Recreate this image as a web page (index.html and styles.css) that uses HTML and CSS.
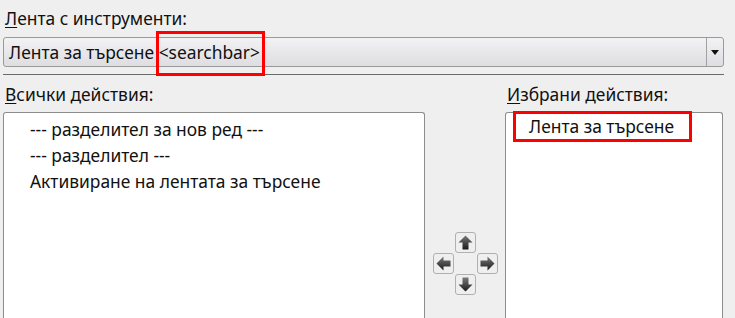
FILE: index.html
```html
<!DOCTYPE html>
<html>
<head>
<meta charset="utf-8">
<link rel="stylesheet" href="styles.css">
</head>
<body>
<div class="page">
  <div class="label top-label"><u>Л</u>ента с инструменти:</div>
  <div class="combo">
    <div class="combo-text">Лента за търсене <span class="hl-inline">&lt;searchbar&gt;</span></div>
    <div class="combo-btn"><svg width="8" height="5" viewBox="0 0 8 5"><path d="M0 0H8L4 5Z" fill="#111"/></svg></div>
  </div>
  <div class="rule"></div>
  <div class="columns">
    <div class="col left-col">
      <div class="label"><u>В</u>сички действия:</div>
      <div class="list">
        <div class="item">--- разделител за нов ред ---</div>
        <div class="item">--- разделител ---</div>
        <div class="item">Активиране на лентата за търсене</div>
      </div>
    </div>
    <div class="mid">
      <div class="pad">
        <div class="abtn up"><svg class="ico" width="15" height="15" viewBox="0 0 15 15"><defs><linearGradient id="g1" x1="0" y1="0" x2="0" y2="1"><stop offset="0" stop-color="#7a7a7a"/><stop offset="1" stop-color="#1a1a1a"/></linearGradient></defs><path d="M7.5 0.5L14.5 7.5H10.5V14.5H4.5V7.5H0.5Z" fill="url(#g1)"/></svg></div>
        <div class="row">
          <div class="abtn"><svg class="ico" width="15" height="15" viewBox="0 0 15 15"><defs><linearGradient id="g2" x1="0" y1="0" x2="0" y2="1"><stop offset="0" stop-color="#7a7a7a"/><stop offset="1" stop-color="#1a1a1a"/></linearGradient></defs><path d="M0.5 7.5L7.5 0.5V4.5H14.5V10.5H7.5V14.5Z" fill="url(#g2)"/></svg></div>
          <div class="abtn"><svg class="ico" width="15" height="15" viewBox="0 0 15 15"><defs><linearGradient id="g3" x1="0" y1="0" x2="0" y2="1"><stop offset="0" stop-color="#7a7a7a"/><stop offset="1" stop-color="#1a1a1a"/></linearGradient></defs><path d="M14.5 7.5L7.5 0.5V4.5H0.5V10.5H7.5V14.5Z" fill="url(#g3)"/></svg></div>
        </div>
        <div class="abtn down"><svg class="ico" width="15" height="15" viewBox="0 0 15 15"><defs><linearGradient id="g4" x1="0" y1="0" x2="0" y2="1"><stop offset="0" stop-color="#7a7a7a"/><stop offset="1" stop-color="#1a1a1a"/></linearGradient></defs><path d="M7.5 14.5L14.5 7.5H10.5V0.5H4.5V7.5H0.5Z" fill="url(#g4)"/></svg></div>
      </div>
    </div>
    <div class="col right-col">
      <div class="label"><u>И</u>збрани действия:</div>
      <div class="list">
        <div class="item sel"><span class="hl-box">Лента за търсене</span></div>
      </div>
    </div>
  </div>
</div>
</body>
</html>
```
FILE: styles.css
```css
html, body {
  margin: 0;
  padding: 0;
  background: #efefef;
  overflow: hidden;
  height: 318px;
}
body {
  font-family: "Noto Sans", "DejaVu Sans", sans-serif;
  font-size: 17.4px;
  color: #111;
}
.page {
  padding: 0 11px 0 3px;
  display: flex;
  flex-direction: column;
}
.label {
  line-height: 20px;
  padding-left: 2px;
}
.label u {
  text-decoration-thickness: 1px;
  text-underline-offset: 2px;
}
.top-label {
  margin-top: 8px;
}
.combo {
  margin-top: 9px;
  height: 30px;
  box-sizing: border-box;
  border: 1px solid #9a9a9a;
  border-radius: 3px;
  background: linear-gradient(#f2f2f4, #dedee2);
  display: flex;
  align-items: center;
}
.combo-text {
  flex: 1;
  padding-left: 5px;
  white-space: nowrap;
}
.hl-inline {
  position: relative;
}
.hl-inline::after {
  content: "";
  position: absolute;
  left: -3px;
  right: -5px;
  top: calc(50% - 21px);
  height: 45px;
  box-sizing: border-box;
  border: 3px solid #f00;
}
.combo-btn {
  width: 16px;
  height: 100%;
  border-left: 1px solid #a0a0a0;
  display: flex;
  align-items: center;
  justify-content: center;
}
.rule {
  margin-top: 7px;
  height: 1px;
  background: #6a6a6a;
}
.columns {
  margin-top: 9px;
  display: flex;
}
.col {
  display: flex;
  flex-direction: column;
}
.left-col {
  width: 422px;
}
.right-col {
  width: 218px;
}
.list {
  margin-top: 8px;
  height: 303px;
  box-sizing: border-box;
  background: #fff;
  border: 1px solid #8c8c8c;
  border-bottom: none;
  border-radius: 3px 3px 0 0;
  padding-top: 3px;
}
.item {
  line-height: 26px;
  padding-left: 26px;
  white-space: nowrap;
}
.item.sel {
  padding-left: 7px;
  display: flex;
}
.hl-box {
  display: block;
  border: 3px solid #f00;
  line-height: 25px;
  padding: 0 15px 0 13px;
  margin-top: -5px;
}
.mid {
  width: 80px;
  display: flex;
  align-items: center;
  justify-content: center;
  padding-top: 28px;
}
.pad {
  display: flex;
  flex-direction: column;
  align-items: center;
}
.row {
  display: flex;
}
.abtn {
  width: 21px;
  height: 21px;
  box-sizing: border-box;
  border: 1px solid #b0b0b0;
  border-radius: 3px;
  display: flex;
  align-items: center;
  justify-content: center;
  background: #efefef;
}
.ico {
  flex: none;
}
.row .abtn:first-child {
  margin-right: 23px;
}
```
